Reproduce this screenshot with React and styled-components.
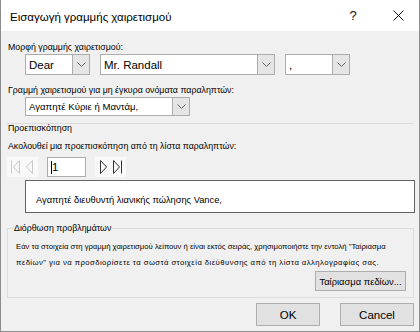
import React from "react";
import styled, { createGlobalStyle } from "styled-components";

const Global = createGlobalStyle`
  html, body { margin: 0; padding: 0; background: #ffffff; }
  body { font-family: "Liberation Sans", Arial, sans-serif; color: #000; }
  * { box-sizing: border-box; }
`;

// Window frame
const Window = styled.div`
  width: 420px;
  height: 332px;
  background: #f0f0f0;
  border: 1px solid #8c8c8c;
  border-top: none;
  display: flex;
  flex-direction: column;
  overflow: hidden;
`;

const TitleBar = styled.div`
  height: 31px;
  flex: none;
  background: #ffffff;
  display: flex;
  align-items: center;
  padding-left: 9px;
`;

const Title = styled.div`
  flex: 1;
  font-size: 11.5px;
  padding-top: 2px;
`;

const TitleButton = styled.div`
  width: ${(p) => p.$w}px;
  height: 31px;
  display: flex;
  align-items: center;
  justify-content: center;
  font-size: 13px;
  color: #111;
`;

const Body = styled.div`
  flex: 1;
  padding: 0 5px 0 7px;
  display: flex;
  flex-direction: column;
`;

const Label = styled.div`
  height: 14px;
  line-height: 14px;
  font-size: 8.8px;
  white-space: nowrap;
  margin-top: ${(p) => p.$mt || 0}px;
`;

const Row = styled.div`
  display: flex;
  align-items: center;
  gap: ${(p) => p.$gap || 0}px;
  margin-top: ${(p) => p.$mt || 0}px;
  margin-left: ${(p) => p.$ml || 0}px;
`;

// Combo box: white field + grey drop button
const Combo = styled.div`
  width: ${(p) => p.$w}px;
  height: ${(p) => p.$h || 21}px;
  display: flex;
  border: 1px solid #acacac;
  background: #ffffff;
`;

const ComboText = styled.div`
  flex: 1;
  padding-left: 3px;
  font-size: ${(p) => p.$fs || 11.5}px;
  display: flex;
  align-items: center;
  white-space: nowrap;
  overflow: hidden;
`;

const ComboButton = styled.div`
  width: 17px;
  background: #e5e5e5;
  border-left: 1px solid #acacac;
  display: flex;
  align-items: center;
  justify-content: center;
`;

const Chevron = () => (
  <svg width="9" height="5" viewBox="0 0 9 5">
    <path d="M0.5 0.5 L4.5 4.5 L8.5 0.5" fill="none" stroke="#606060" strokeWidth="1" />
  </svg>
);

// "Προεπισκόπηση" separator: a thin rule across the dialog with the label under it
const SectionHead = styled.div`
  margin: 7px 0 0 -1px;
  padding-left: 1px;
  border-top: 1px solid #dcdcdc;
  height: 10px;
  line-height: 9px;
  font-size: 8.8px;
`;

const NavGroup = styled.div`
  width: 31px;
  height: 20px;
  background: #f9f9f9;
  display: flex;
  align-items: center;
  justify-content: space-between;
  padding: 0 3px;
`;

const RecordInput = styled.div`
  width: 39px;
  height: 20px;
  border: 1px solid #acacac;
  background: #fff;
  font-size: 11.5px;
  display: flex;
  align-items: center;
  padding-left: 3px;
  margin: 0 9px;
`;

const Caret = styled.span`
  display: inline-block;
  width: 1px;
  height: 13px;
  background: #000;
`;

const Preview = styled.div`
  margin-top: 3px;
  margin-left: 17px;
  width: 390px;
  height: 33px;
  border: 1px solid #646464;
  background: #fff;
  padding: 12px 0 0 10px;
  font-size: 9.3px;
  line-height: 14px;
  white-space: nowrap;
`;

const Fieldset = styled.fieldset`
  margin: 9px 0 0 -1px;
  width: 407px;
  height: 76px;
  border: 1px solid #dcdcdc;
  padding: 0 7px 6px 8px;
  display: flex;
  flex-direction: column;
  min-inline-size: 0;
`;

const Legend = styled.legend`
  font-size: 8.8px;
  padding: 0 1px;
  margin-left: -3px;
  line-height: 12px;
`;

const HelpText = styled.div`
  margin-top: 5px;
`;

const HelpLine = styled.div`
  font-size: 7.7px;
  line-height: 16px;
  white-space: nowrap;
  letter-spacing: ${(p) => p.$ls || 0}px;
`;

const Button = styled.div`
  width: ${(p) => p.$w}px;
  height: ${(p) => p.$h || 23}px;
  background: #e1e1e1;
  border: 1px solid #adadad;
  display: flex;
  align-items: center;
  justify-content: center;
  font-size: ${(p) => p.$fs || 11.5}px;
  white-space: nowrap;
`;

const FieldButtonRow = styled.div`
  display: flex;
  justify-content: flex-end;
`;

const Footer = styled.div`
  display: flex;
  justify-content: flex-end;
  gap: 20px;
  margin-top: 5px;
`;

const NavIcon = ({ kind, color }) => {
  const paths = {
    first: (
      <>
        <path d="M1.5 0.5 V13.5" stroke={color} fill="none" />
        <path d="M9.5 0.5 L3.5 7 L9.5 13.5 Z" stroke={color} fill="none" />
      </>
    ),
    prev: <path d="M8.5 0.5 L2.5 7 L8.5 13.5 Z" stroke={color} fill="none" />,
    next: <path d="M2.5 0.5 L8.5 7 L2.5 13.5 Z" stroke={color} fill="none" />,
    last: (
      <>
        <path d="M1.5 0.5 L7.5 7 L1.5 13.5 Z" stroke={color} fill="none" />
        <path d="M9.5 0.5 V13.5" stroke={color} fill="none" />
      </>
    ),
  };
  return (
    <svg width="11" height="14" viewBox="0 0 11 14">
      {paths[kind]}
    </svg>
  );
};

const App = () => {
  return (
    <>
      <Global />
      <Window>
        <TitleBar>
          <Title>Εισαγωγή γραμμής χαιρετισμού</Title>
          <TitleButton $w={48}>?</TitleButton>
          <TitleButton $w={42}>
            <svg width="11" height="11" viewBox="0 0 11 11">
              <path d="M0.5 0.5 L10.5 10.5 M10.5 0.5 L0.5 10.5" stroke="#111" strokeWidth="1" />
            </svg>
          </TitleButton>
        </TitleBar>
        <Body>
          <Label $mt={9}>Μορφή γραμμής χαιρετισμού:</Label>
          <Row $ml={17} $gap={10}>
            <Combo $w={65}>
              <ComboText>Dear</ComboText>
              <ComboButton>
                <Chevron />
              </ComboButton>
            </Combo>
            <Combo $w={175}>
              <ComboText>Mr. Randall</ComboText>
              <ComboButton>
                <Chevron />
              </ComboButton>
            </Combo>
            <Combo $w={65}>
              <ComboText>,</ComboText>
              <ComboButton>
                <Chevron />
              </ComboButton>
            </Combo>
          </Row>
          <Label $mt={8}>Γραμμή χαιρετισμού για μη έγκυρα ονόματα παραληπτών:</Label>
          <Row $ml={17}>
            <Combo $w={165} $h={19}>
              <ComboText $fs={9.6}>Αγαπητέ Κύριε ή Μαντάμ,</ComboText>
              <ComboButton>
                <Chevron />
              </ComboButton>
            </Combo>
          </Row>
          <SectionHead>Προεπισκόπηση</SectionHead>
          <Label $mt={6}>Ακολουθεί μια προεπισκόπηση από τη λίστα παραληπτών:</Label>
          <Row $mt={4} $ml={-1}>
            <NavGroup>
              <NavIcon kind="first" color="#c9c9c9" />
              <NavIcon kind="prev" color="#c9c9c9" />
            </NavGroup>
            <RecordInput>
              <Caret />1
            </RecordInput>
            <NavGroup>
              <NavIcon kind="next" color="#333" />
              <NavIcon kind="last" color="#333" />
            </NavGroup>
          </Row>
          <Preview>Αγαπητέ διευθυντή λιανικής πώλησης Vance,</Preview>
          <Fieldset>
            <Legend>Διόρθωση προβλημάτων</Legend>
            <HelpText>
              <HelpLine>
                Εάν τα στοιχεία στη γραμμή χαιρετισμού λείπουν ή είναι εκτός σειράς, χρησιμοποιήστε την εντολή "Ταίριασμα
              </HelpLine>
              <HelpLine $ls={0.45}>
                πεδίων" για να προσδιορίσετε τα σωστά στοιχεία διεύθυνσης από τη λίστα αλληλογραφίας σας.
              </HelpLine>
            </HelpText>
            <FieldButtonRow>
              <Button $w={91} $h={20} $fs={9.4}>
                Ταίριασμα πεδίων...
              </Button>
            </FieldButtonRow>
          </Fieldset>
          <Footer>
            <Button $w={64}>OK</Button>
            <Button $w={74}>Cancel</Button>
          </Footer>
        </Body>
      </Window>
    </>
  );
};

export default App;
